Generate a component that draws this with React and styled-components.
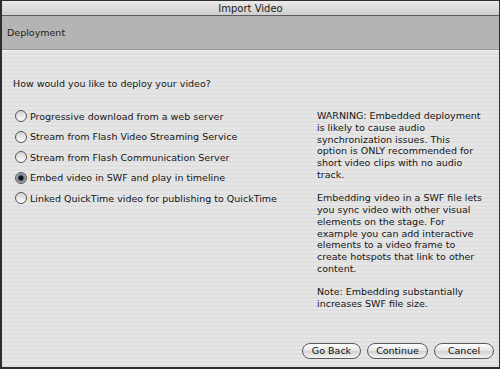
import React from 'react';
import styled, { createGlobalStyle } from 'styled-components';

const GlobalStyle = createGlobalStyle`
  html, body {
    margin: 0;
    padding: 0;
    background: #2b2b2b;
  }
  body {
    font-family: 'DejaVu Sans', 'Liberation Sans', sans-serif;
  }
`

const Window = styled.div`
  width: 500px;
  height: 369px;
  box-sizing: border-box;
  border: 1px solid #2e2e2e;
  border-left-width: 2px;
  border-bottom-width: 2px;
  display: flex;
  flex-direction: column;
  background: #e4e4e4;
  overflow: hidden;
`

const TitleBar = styled.div`
  flex-shrink: 0;
  height: 14px;
  display: flex;
  align-items: center;
  justify-content: center;
  background: linear-gradient(#eaeaea, #cfcfcf);
  border-bottom: 1px solid #5c5c5c;
  font-size: 10px;
  color: #1a1a1a;
`

const Header = styled.div`
  flex-shrink: 0;
  height: 33px;
  display: flex;
  align-items: center;
  padding-left: 5px;
  background: #b4b4b4;
  border-bottom: 1px solid #9a9a9a;
  font-size: 9.5px;
  color: #222;
`

const Body = styled.div`
  flex: 1;
  display: flex;
  flex-direction: column;
  padding: 27px 5px 8px 13px;
  border-top: 1px solid #f0f0f0;
  background: repeating-linear-gradient(#e6e6e6 0px, #e6e6e6 2px, #dfdfdf 2px, #dfdfdf 4px);
  font-size: 9.5px;
  color: #151515;
`

const Question = styled.div`
  margin-left: -2px;
  margin-bottom: 20px;
`

const Columns = styled.div`
  display: grid;
  grid-template-columns: 302px 1fr;
`

const OptionList = styled.div`
  display: flex;
  flex-direction: column;
  gap: 6.6px;
`

const Option = styled.label`
  display: flex;
  align-items: center;
  gap: 3px;
  height: 14px;
  white-space: nowrap;
`

const Radio = styled.span`
  width: 10px;
  height: 10px;
  border-radius: 50%;
  border: 1px solid #555;
  background: ${p => p.checked
    ? 'radial-gradient(circle, #111 0 2px, #6f7b86 3px, #c8ced4 6px)'
    : 'linear-gradient(#d4d4d4, #fcfcfc)'};
  flex-shrink: 0;
`

const Notes = styled.div`
  display: flex;
  flex-direction: column;
  gap: 11.75px;
  line-height: 11.75px;
  padding-top: 1px;
`

const Para = styled.p`
  margin: 0;
  white-space: nowrap;
`

const ButtonRow = styled.div`
  margin-top: auto;
  display: flex;
  justify-content: flex-end;
  gap: 6px;
`

const Button = styled.button`
  width: ${p => p.w}px;
  height: 16px;
  border-radius: 8px;
  border: 1px solid #5a5a5a;
  background: linear-gradient(#ffffff, #e4e4e4 50%, #d2d2d2 51%, #f4f4f4);
  font-family: inherit;
  font-size: 9.5px;
  line-height: 14px;
  color: #111;
  padding: 0;
`

const options = [
  'Progressive download from a web server',
  'Stream from Flash Video Streaming Service',
  'Stream from Flash Communication Server',
  'Embed video in SWF and play in timeline',
  'Linked QuickTime video for publishing to QuickTime',
];

const notes = [
  ['WARNING: Embedded deployment', 'is likely to cause audio', 'synchronization issues. This', 'option is ONLY recommended for', 'short video clips with no audio', 'track.'],
  ['Embedding video in a SWF file lets', 'you sync video with other visual', 'elements on the stage. For', 'example you can add interactive', 'elements to a video frame to', 'create hotspots that link to other', 'content.'],
  ['Note: Embedding substantially', 'increases SWF file size.'],
];

export default function App() {
  return (
    <>
      <GlobalStyle />
      <Window>
        <TitleBar>Import Video</TitleBar>
        <Header>Deployment</Header>
        <Body>
          <Question>How would you like to deploy your video?</Question>
          <Columns>
            <OptionList>
              {options.map((o, i) => (
                <Option key={o}>
                  <Radio checked={i === 3} />
                  {o}
                </Option>
              ))}
            </OptionList>
            <Notes>
              {notes.map((lines, i) => (
                <Para key={i}>
                  {lines.map((l, j) => <React.Fragment key={j}>{l}<br /></React.Fragment>)}
                </Para>
              ))}
            </Notes>
          </Columns>
          <ButtonRow>
            <Button w={59}>Go Back</Button>
            <Button w={61}>Continue</Button>
            <Button w={60}>Cancel</Button>
          </ButtonRow>
        </Body>
      </Window>
    </>
  );
}
